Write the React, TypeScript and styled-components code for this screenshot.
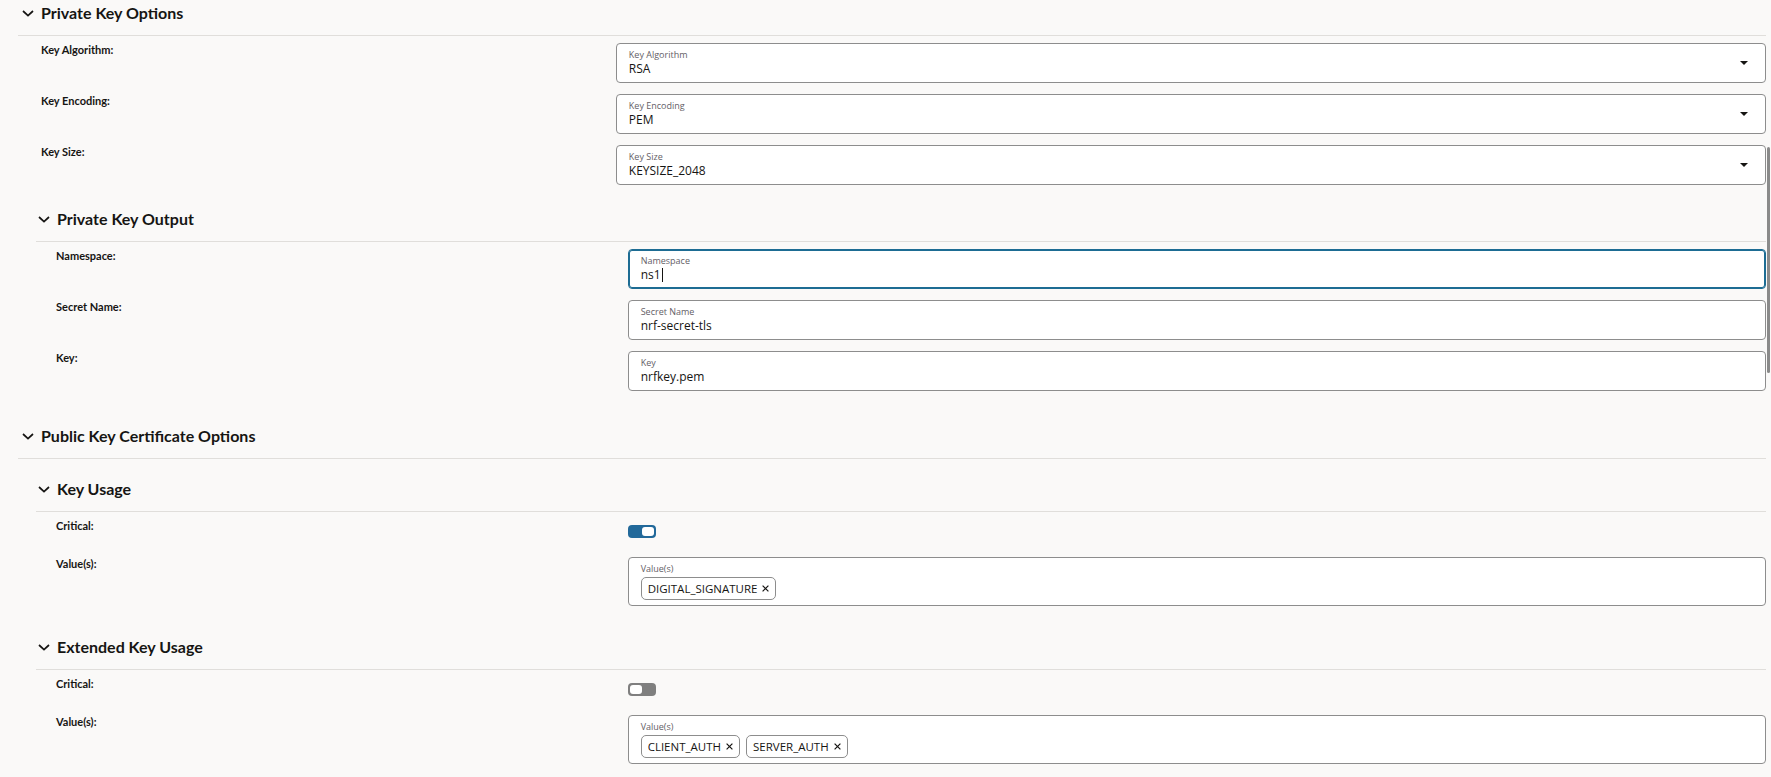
import React from 'react';
import styled, { createGlobalStyle } from 'styled-components';

const GlobalStyle = createGlobalStyle`
  html, body {
    margin: 0;
    padding: 0;
    background: #faf9f8;
  }
  body {
    font-family: Lato, 'Open Sans', sans-serif;
    color: #161513;
    overflow: hidden;
  }
`;

const Page = styled.div`
  position: relative;
  display: flex;
  flex-direction: column;
  gap: 25px;
  height: 777px;
  box-sizing: border-box;
  padding: 0 5px 0 18px;
  overflow: hidden;
`;

const Scrollbar = styled.div`
  position: absolute;
  right: 1px;
  top: 147px;
  width: 3px;
  height: 226px;
  border-radius: 2px;
  background: #8a8a8a;
`;

const Section = styled.section<{ $level: number }>`
  margin-left: ${p => (p.$level ? 18 : 0)}px;
  margin-top: ${p => (p.$level ? 10 : 0)}px;
`;

const Heading = styled.div<{ $level: number }>`
  display: flex;
  align-items: center;
  gap: 7px;
  height: 26px;
  padding: 0 0 9px ${p => (p.$level ? 2 : 4)}px;
  border-bottom: 1px solid #e0dedb;

  h2 {
    margin: 0;
    font-size: 16px;
    line-height: 26px;
    font-weight: 700;
  }
`;

const Body = styled.div<{ $level: number }>`
  display: flex;
  flex-direction: column;
  gap: 11px;
  padding-top: 7px;
  padding-bottom: ${p => (p.$level ? 7 : 0)}px;
`;

const Row = styled.div<{ $level: number }>`
  display: grid;
  grid-template-columns: 34.2% 1fr;
  align-items: start;
  min-height: 27px;

  label {
    padding-left: ${p => (p.$level ? 20 : 23)}px;
    font-size: 11px;
    line-height: 14px;
    font-weight: 700;
  }
`;

const Field = styled.div<{ $focused?: boolean }>`
  display: flex;
  align-items: center;
  box-sizing: border-box;
  padding: 5px 12px;
  background: #fff;
  border: 1px solid ${p => (p.$focused ? '#1d6c93' : '#8d8d8d')};
  box-shadow: ${p => (p.$focused ? 'inset 0 0 0 1px #1d6c93' : 'none')};
  border-radius: 4px;
  font-family: 'Open Sans', sans-serif;
`;

const FieldInner = styled.div`
  flex: 1;
  min-width: 0;
`;

const Hint = styled.div`
  font-size: 9px;
  line-height: 12px;
  color: #645e66;
`;

const Value = styled.div`
  display: flex;
  align-items: center;
  font-size: 12px;
  line-height: 16px;
  color: #161513;
`;

const Caret = styled.span`
  display: inline-block;
  width: 1px;
  height: 14px;
  margin-left: 1px;
  background: #161513;
`;

const Chips = styled.div`
  display: flex;
  gap: 6px;
  margin-top: 2px;
`;

const Chip = styled.span`
  display: inline-flex;
  align-items: center;
  gap: 5px;
  box-sizing: border-box;
  height: 23px;
  padding: 0 6px;
  background: #fff;
  border: 1px solid #8d8d8d;
  border-radius: 5px;
  font-size: 11.5px;
  color: #161513;
`;

const Toggle = styled.span<{ $on: boolean }>`
  display: flex;
  justify-content: ${p => (p.$on ? 'flex-end' : 'flex-start')};
  box-sizing: border-box;
  width: 28px;
  height: 13px;
  margin-top: 6px;
  padding: 2px;
  border-radius: 4px;
  background: ${p => (p.$on ? '#22699a' : '#7f7f7f')};

  &::after {
    content: '';
    width: 12px;
    height: 9px;
    border-radius: 3px;
    background: #fff;
  }
`;

const Chevron = () => (
  <svg width="12" height="7" viewBox="0 0 12 7" fill="none">
    <polyline points="1,1 6,5.6 11,1" stroke="#161513" strokeWidth="1.7" />
  </svg>
);

const Arrow = () => (
  <svg width="8" height="4" viewBox="0 0 8 4" style={{ marginRight: 5 }}>
    <polygon points="0,0 8,0 4,4" fill="#161513" />
  </svg>
);

const Cross = () => (
  <svg width="7" height="7" viewBox="0 0 7 7">
    <path d="M0.6 0.6 L6.4 6.4 M6.4 0.6 L0.6 6.4" stroke="#161513" strokeWidth="1.2" />
  </svg>
);

interface SectionProps {
  title: string;
  level: number;
  children?: React.ReactNode;
}

const FormSection: React.FC<SectionProps> = ({ title, level, children }) => (
  <Section $level={level}>
    <Heading $level={level}>
      <Chevron />
      <h2>{title}</h2>
    </Heading>
    <Body $level={level}>{children}</Body>
  </Section>
);

interface TextRowProps {
  label: string;
  value: string;
  level: number;
  select?: boolean;
  focused?: boolean;
}

const TextRow: React.FC<TextRowProps> = ({ label, value, level, select, focused }) => (
  <Row $level={level}>
    <label>{label}:</label>
    <Field $focused={focused}>
      <FieldInner>
        <Hint>{label}</Hint>
        <Value>
          {value}
          {focused && <Caret />}
        </Value>
      </FieldInner>
      {select && <Arrow />}
    </Field>
  </Row>
);

const ToggleRow: React.FC<{ on: boolean }> = ({ on }) => (
  <Row $level={1}>
    <label>Critical:</label>
    <Toggle $on={on} />
  </Row>
);

const ChipsRow: React.FC<{ values: string[] }> = ({ values }) => (
  <Row $level={1}>
    <label>Value(s):</label>
    <Field>
      <FieldInner>
        <Hint>Value(s)</Hint>
        <Chips>
          {values.map(v => (
            <Chip key={v}>
              {v}
              <Cross />
            </Chip>
          ))}
        </Chips>
      </FieldInner>
    </Field>
  </Row>
);

const App: React.FC = () => (
  <>
    <GlobalStyle />
    <Page>
      <FormSection title="Private Key Options" level={0}>
        <TextRow level={0} label="Key Algorithm" value="RSA" select />
        <TextRow level={0} label="Key Encoding" value="PEM" select />
        <TextRow level={0} label="Key Size" value="KEYSIZE_2048" select />
        <FormSection title="Private Key Output" level={1}>
          <TextRow level={1} label="Namespace" value="ns1" focused />
          <TextRow level={1} label="Secret Name" value="nrf-secret-tls" />
          <TextRow level={1} label="Key" value="nrfkey.pem" />
        </FormSection>
      </FormSection>
      <FormSection title="Public Key Certificate Options" level={0}>
        <FormSection title="Key Usage" level={1}>
          <ToggleRow on />
          <ChipsRow values={['DIGITAL_SIGNATURE']} />
        </FormSection>
        <FormSection title="Extended Key Usage" level={1}>
          <ToggleRow on={false} />
          <ChipsRow values={['CLIENT_AUTH', 'SERVER_AUTH']} />
        </FormSection>
      </FormSection>
      <Scrollbar />
    </Page>
  </>
);

export default App;
